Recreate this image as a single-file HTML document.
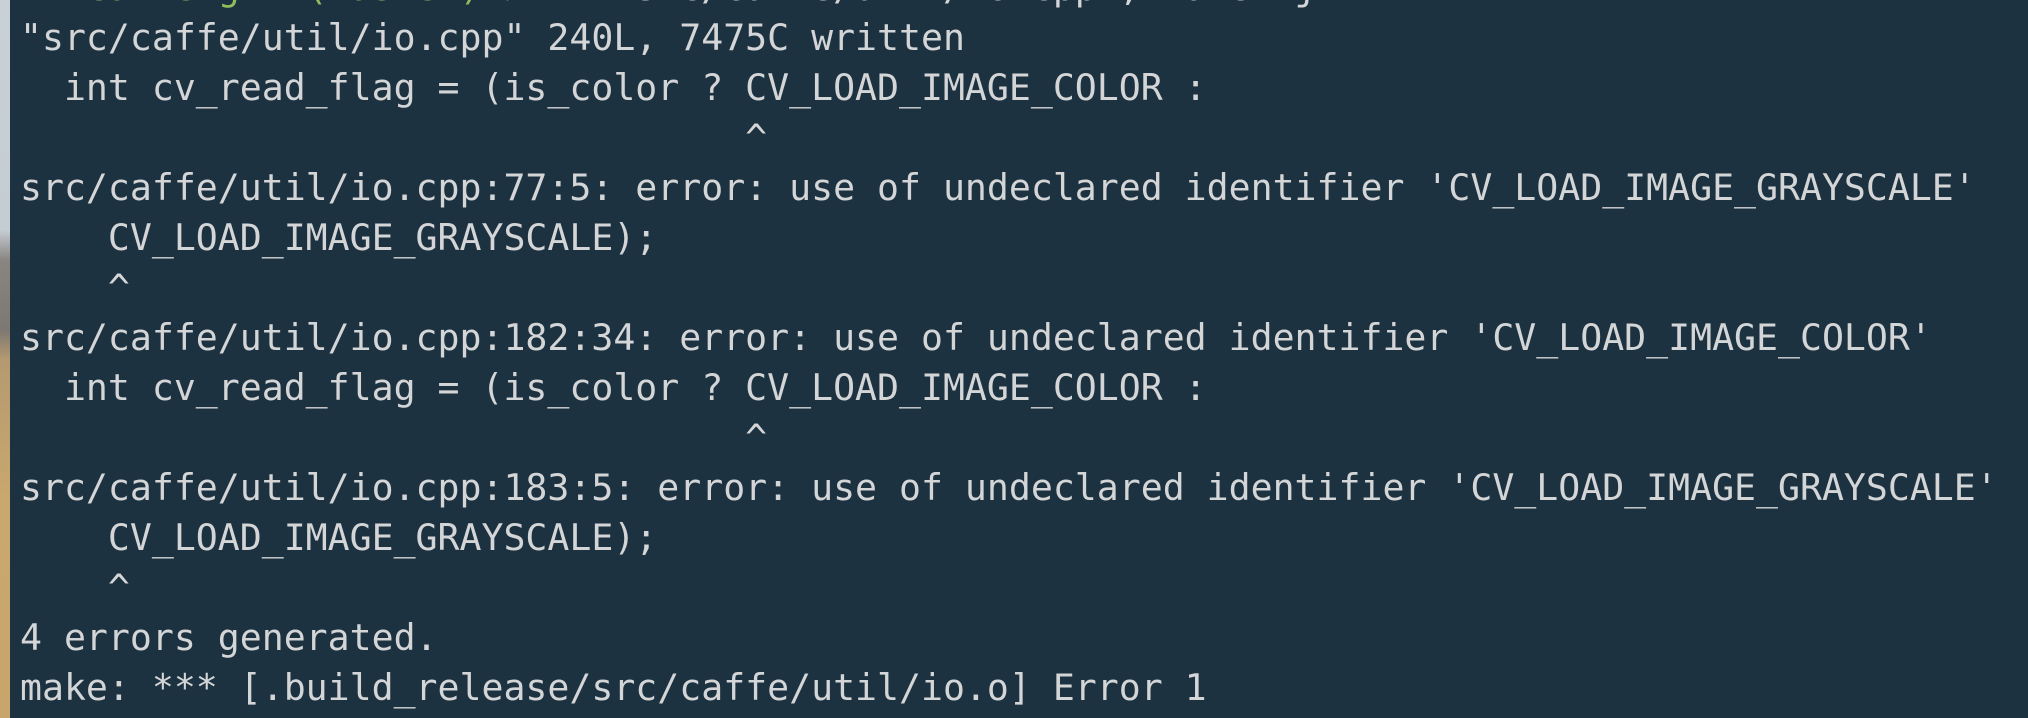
<!DOCTYPE html>
<html><head><meta charset="utf-8"><style>
html,body{margin:0;padding:0;width:2028px;height:718px;overflow:hidden;background:#1d3241;}
.strip{position:absolute;left:0;top:0;width:10px;height:718px;background:linear-gradient(#c9d0d8 0,#c4ccd4 230px,#8a8580 260px,#7d7872 330px,#b49a70 360px,#c9a86e 500px,#c8a56a 718px);}
pre{position:absolute;left:20px;top:-37px;margin:0;font-family:"DejaVu Sans Mono","Liberation Mono",monospace;font-size:36.5px;line-height:50px;color:#d3d5d6;white-space:pre;}
.g{color:#8fbf5a}
</style></head><body>
<div class="strip"></div>
<pre><span class="g">➜  caffe git:(master)</span> ✗ vim src/caffe/util/io.cpp ; make -j
"src/caffe/util/io.cpp" 240L, 7475C written
  int cv_read_flag = (is_color ? CV_LOAD_IMAGE_COLOR :
                                 ^
src/caffe/util/io.cpp:77:5: error: use of undeclared identifier 'CV_LOAD_IMAGE_GRAYSCALE'
    CV_LOAD_IMAGE_GRAYSCALE);
    ^
src/caffe/util/io.cpp:182:34: error: use of undeclared identifier 'CV_LOAD_IMAGE_COLOR'
  int cv_read_flag = (is_color ? CV_LOAD_IMAGE_COLOR :
                                 ^
src/caffe/util/io.cpp:183:5: error: use of undeclared identifier 'CV_LOAD_IMAGE_GRAYSCALE'
    CV_LOAD_IMAGE_GRAYSCALE);
    ^
4 errors generated.
make: *** [.build_release/src/caffe/util/io.o] Error 1</pre>
</body></html>
